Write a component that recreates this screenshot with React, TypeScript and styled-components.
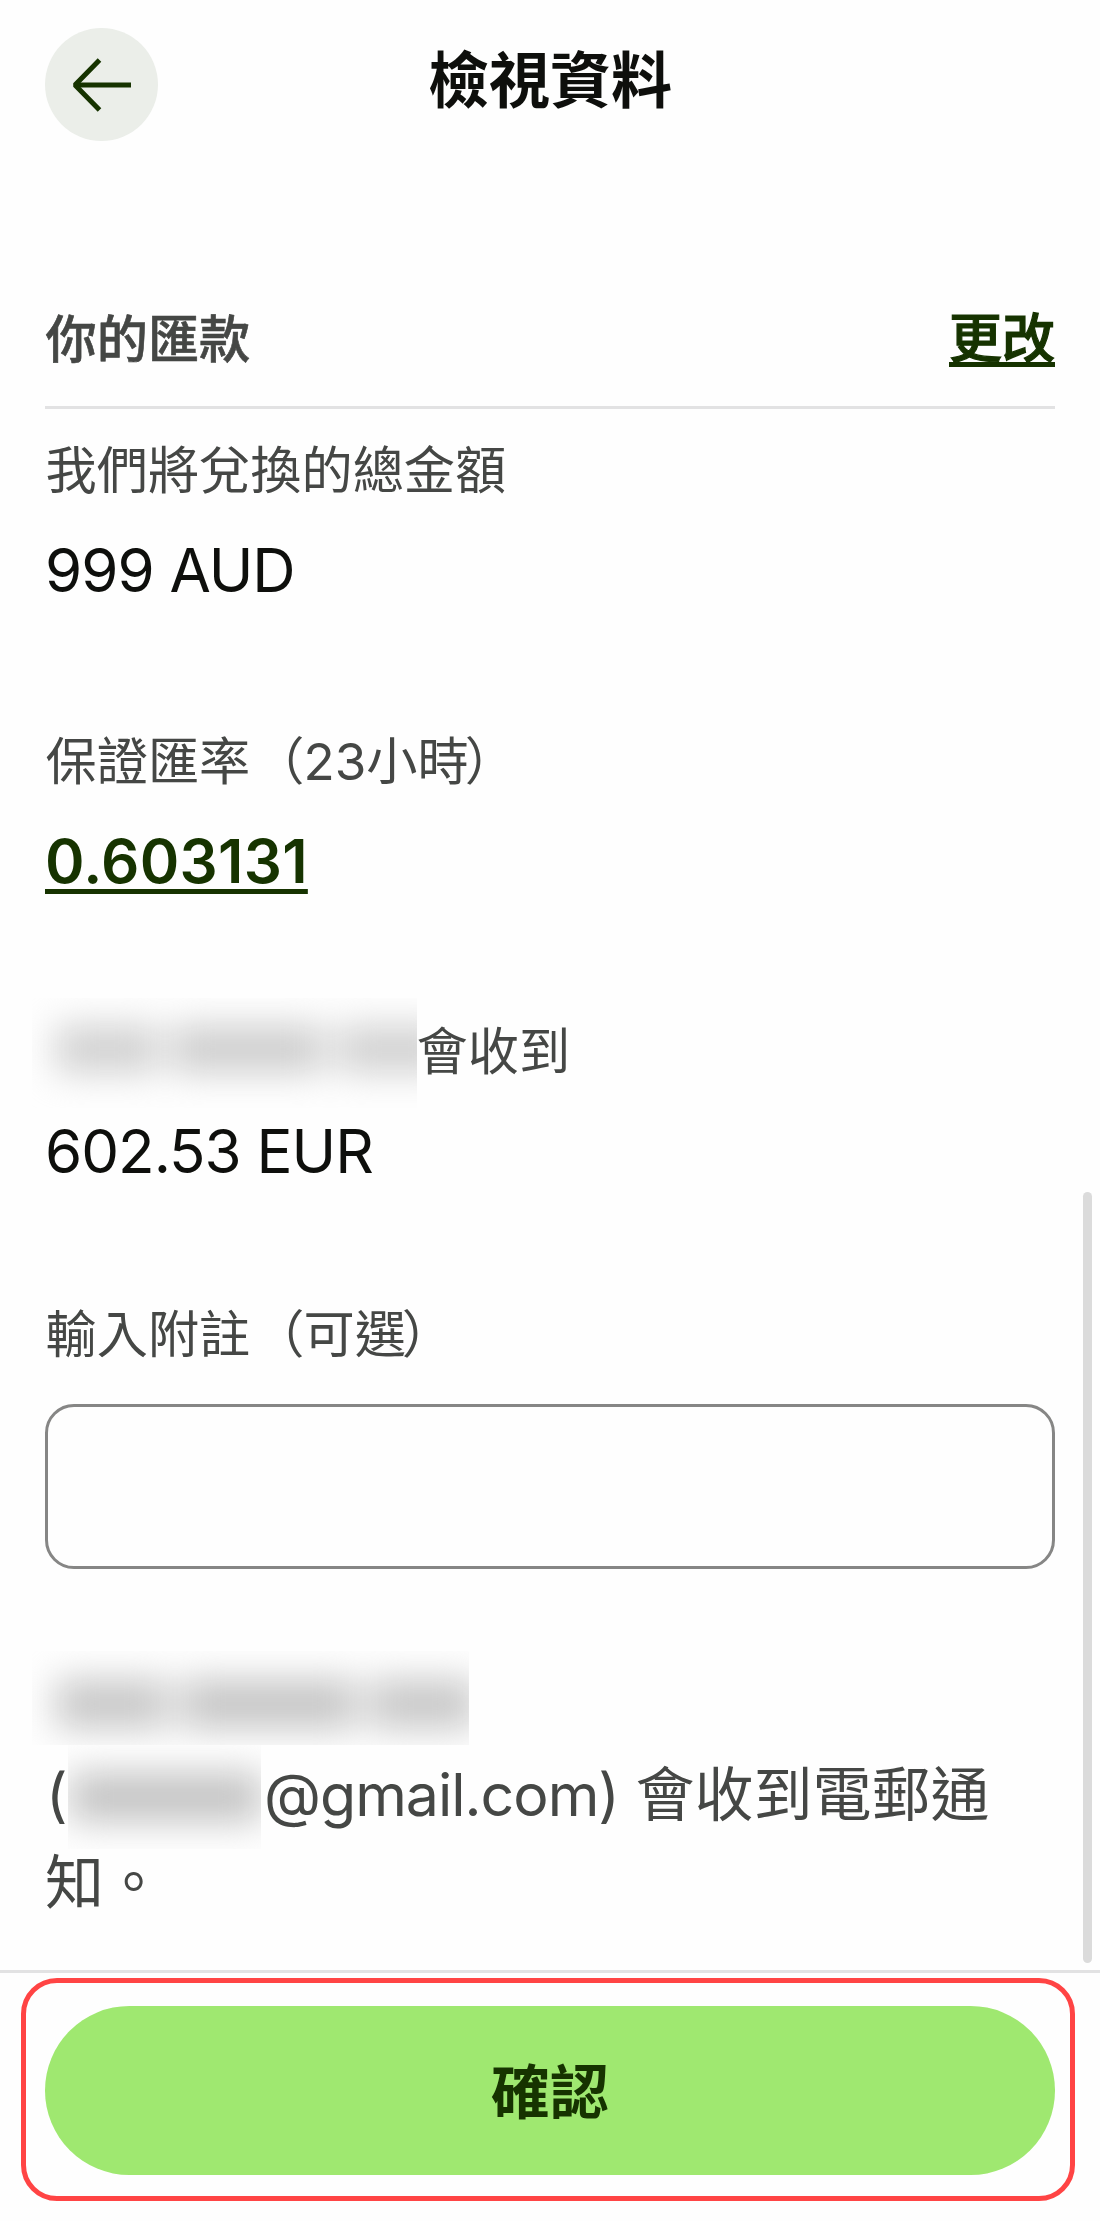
import React from "react";
import styled, { createGlobalStyle } from "styled-components";

const color = {
  ink: "#0e0f0c",
  body: "#454745",
  forest: "#163300",
  lime: "#9fe870",
  line: "#e2e2e3",
  danger: "#ff4444",
};

const GlobalStyle = createGlobalStyle`
  *, *::before, *::after { box-sizing: border-box; }
  body {
    margin: 0;
    background: #fefefe;
    font-family: Inter, "Noto Sans CJK TC", sans-serif;
    color: ${color.body};
  }
`;

const Screen = styled.main`
  position: relative;
  display: flex;
  flex-direction: column;
  width: 1100px;
  height: 2221px;
  overflow: hidden;
`;

const Header = styled.header`
  display: grid;
  grid-template-columns: 113px 1fr 113px;
  padding: 28px 45px 0;
  height: 290px;
`;

const BackButton = styled.button`
  display: grid;
  place-items: center;
  width: 113px;
  height: 113px;
  padding: 0;
  border: 0;
  border-radius: 50%;
  background: #ebeee9;
`;

const Title = styled.h1`
  margin: 8px 0 0;
  height: 90px;
  text-align: center;
  font-size: 61px;
  line-height: 90px;
  font-weight: 700;
  color: ${color.ink};
`;

const Content = styled.section`
  display: flex;
  flex-direction: column;
  height: 1680px;
  padding: 0 45px;
`;

const SectionHead = styled.div`
  display: flex;
  justify-content: space-between;
  height: 119px;
  padding-top: 9px;
  border-bottom: 3px solid ${color.line};
`;

const SectionTitle = styled.h2`
  margin: 0;
  padding-left: 0.5px;
  font-size: 51.2px;
  line-height: 80px;
  font-weight: 500;
  -webkit-text-stroke: 0.6px ${color.body};
`;

const Link = styled.a`
  font-size: 60px;
  line-height: 90px;
  font-weight: 600;
  letter-spacing: 0.3px;
  color: ${color.forest};
  text-decoration: underline;
  text-decoration-thickness: 5px;
  text-underline-offset: 6px;
  text-decoration-skip-ink: none;
`;

const ChangeLink = styled(Link)`
  font-size: 53px;
  line-height: 80px;
  font-weight: 500;
  letter-spacing: 0;
  text-underline-offset: 4px;
  -webkit-text-stroke: 1.2px ${color.forest};
`;

const Details = styled.dl`
  display: flex;
  flex-direction: column;
  margin: 0;
  padding-top: 21px;
`;

const Detail = styled.div`
  height: 290.5px;
`;

const Label = styled.dt`
  display: flex;
  height: 80px;
  padding-left: 0.5px;
  font-size: 51.2px;
  line-height: 80px;
  white-space: nowrap;
`;

const OpenParen = styled.span`
  margin: 0 -1px 0 3px;
`;

const CloseParen = styled.span`
  margin-left: -4px;
`;

const Value = styled.dd`
  margin: 0;
  padding-top: 15px;
  font-size: 60px;
  line-height: 90px;
  letter-spacing: -1px;
  color: ${color.ink};
`;

const FieldLabel = styled.label`
  display: block;
  height: 110px;
  margin-top: -8px;
  padding-left: 0.5px;
  font-size: 51.2px;
  line-height: 80px;
`;

const NoteInput = styled.input`
  display: block;
  flex: none;
  width: 1010px;
  height: 165px;
  padding: 0 36px;
  border: 3px solid #868685;
  border-radius: 29px;
  background: transparent;
  font: inherit;
  font-size: 60px;
`;

const Notice = styled.div`
  padding-top: 94px;
  font-size: 59px;
  line-height: 88px;
`;

const NoticeLine = styled.div`
  display: flex;
  height: 88px;
  white-space: pre;
`;

const Paren = styled.span`
  width: 23px;
  padding-left: 1px;
`;

const Email = styled.span`
  padding-left: 3px;
  letter-spacing: -1px;
`;

const Redaction = styled.span<{ $w: number; $h: number; $left?: number; $top?: number }>`
  flex: none;
  width: ${(p) => p.$w}px;
  height: ${(p) => p.$h}px;
  margin-left: ${(p) => p.$left ?? 0}px;
  margin-top: ${(p) => p.$top ?? 0}px;
  overflow: hidden;
`;

const Smudges = styled.span<{ $drop?: number; $lift?: number }>`
  display: flex;
  height: 100%;
  padding-top: ${(p) => p.$drop ?? 0}px;
  padding-bottom: ${(p) => p.$lift ?? 0}px;
  align-items: center;
  filter: blur(18px);
`;

const Smudge = styled.i<{ $w: number; $gap: number; $shade: string; $h?: number }>`
  flex: none;
  width: ${(p) => p.$w}px;
  height: ${(p) => p.$h ?? 46}px;
  margin-left: ${(p) => p.$gap}px;
  background: ${(p) => p.$shade};
`;

const ScrollThumb = styled.span`
  position: absolute;
  top: 1192px;
  right: 8px;
  width: 9px;
  height: 771px;
  border-radius: 5px;
  background: #dbdbdb;
`;

const Footer = styled.footer`
  flex: 1;
  padding: 5px 25px 20px 21px;
  border-top: 3px solid ${color.line};
`;

const Highlight = styled.div`
  height: 223px;
  padding: 22.5px 15px 20px 19px;
  border: 5.5px solid ${color.danger};
  border-radius: 36px;
`;

const ConfirmButton = styled.button`
  display: block;
  width: 1010px;
  height: 169px;
  padding: 0 0 4px;
  border: 0;
  border-radius: 85px;
  background: ${color.lime};
  font: inherit;
  font-size: 59px;
  font-weight: 700;
  color: ${color.forest};
`;

function ArrowLeft() {
  return (
    <svg width="60" height="56" viewBox="0 0 60 56" fill="none" stroke={color.forest} strokeWidth="5">
      <path d="M59 28H3" />
      <path d="M27.5 3L3 28L27.5 53" strokeLinejoin="bevel" />
    </svg>
  );
}

export default function App() {
  return (
    <>
      <GlobalStyle />
      <Screen>
        <Header>
          <BackButton aria-label="返回">
            <ArrowLeft />
          </BackButton>
          <Title>檢視資料</Title>
        </Header>

        <Content>
          <SectionHead>
            <SectionTitle>你的匯款</SectionTitle>
            <ChangeLink>更改</ChangeLink>
          </SectionHead>

          <Details>
            <Detail>
              <Label>我們將兌換的總金額</Label>
              <Value>999 AUD</Value>
            </Detail>
            <Detail>
              <Label>
                保證匯率<OpenParen>（</OpenParen>23小時<CloseParen>）</CloseParen>
              </Label>
              <Value>
                <Link>0.603131</Link>
              </Value>
            </Detail>
            <Detail>
              <Label>
                <Redaction $w={385} $h={110} $left={-14} $top={-13}>
                  <Smudges $lift={8}>
                    <Smudge $w={102} $gap={24} $shade="#cfcfcf" />
                    <Smudge $w={152} $gap={14} $shade="#cccccc" />
                    <Smudge $w={114} $gap={14} $shade="#d0d0d0" />
                  </Smudges>
                </Redaction>
                會收到
              </Label>
              <Value>602.53 EUR</Value>
            </Detail>
          </Details>

          <FieldLabel htmlFor="note">
            輸入附註<OpenParen>（</OpenParen>可選<CloseParen>）</CloseParen>
          </FieldLabel>
          <NoteInput id="note" />

          <Notice>
            <NoticeLine>
              <Redaction $w={437} $h={94} $left={-13} $top={-12}>
                <Smudges $drop={12}>
                  <Smudge $w={112} $gap={24} $shade="#c6c6c6" $h={48} />
                  <Smudge $w={174} $gap={14} $shade="#c4c4c4" $h={48} />
                  <Smudge $w={106} $gap={14} $shade="#c6c6c6" $h={48} />
                </Smudges>
              </Redaction>
            </NoticeLine>
            <NoticeLine>
              <Paren>(</Paren>
              <Redaction $w={193} $h={104} $top={-6}>
                <Smudges>
                  <Smudge $w={192} $gap={2} $shade="#c2c2c2" $h={48} />
                </Smudges>
              </Redaction>
              <Email>@gmail.com)</Email> 會收到電郵通
            </NoticeLine>
            <NoticeLine>知。</NoticeLine>
          </Notice>
        </Content>

        <Footer>
          <Highlight>
            <ConfirmButton>確認</ConfirmButton>
          </Highlight>
        </Footer>

        <ScrollThumb />
      </Screen>
    </>
  );
}
